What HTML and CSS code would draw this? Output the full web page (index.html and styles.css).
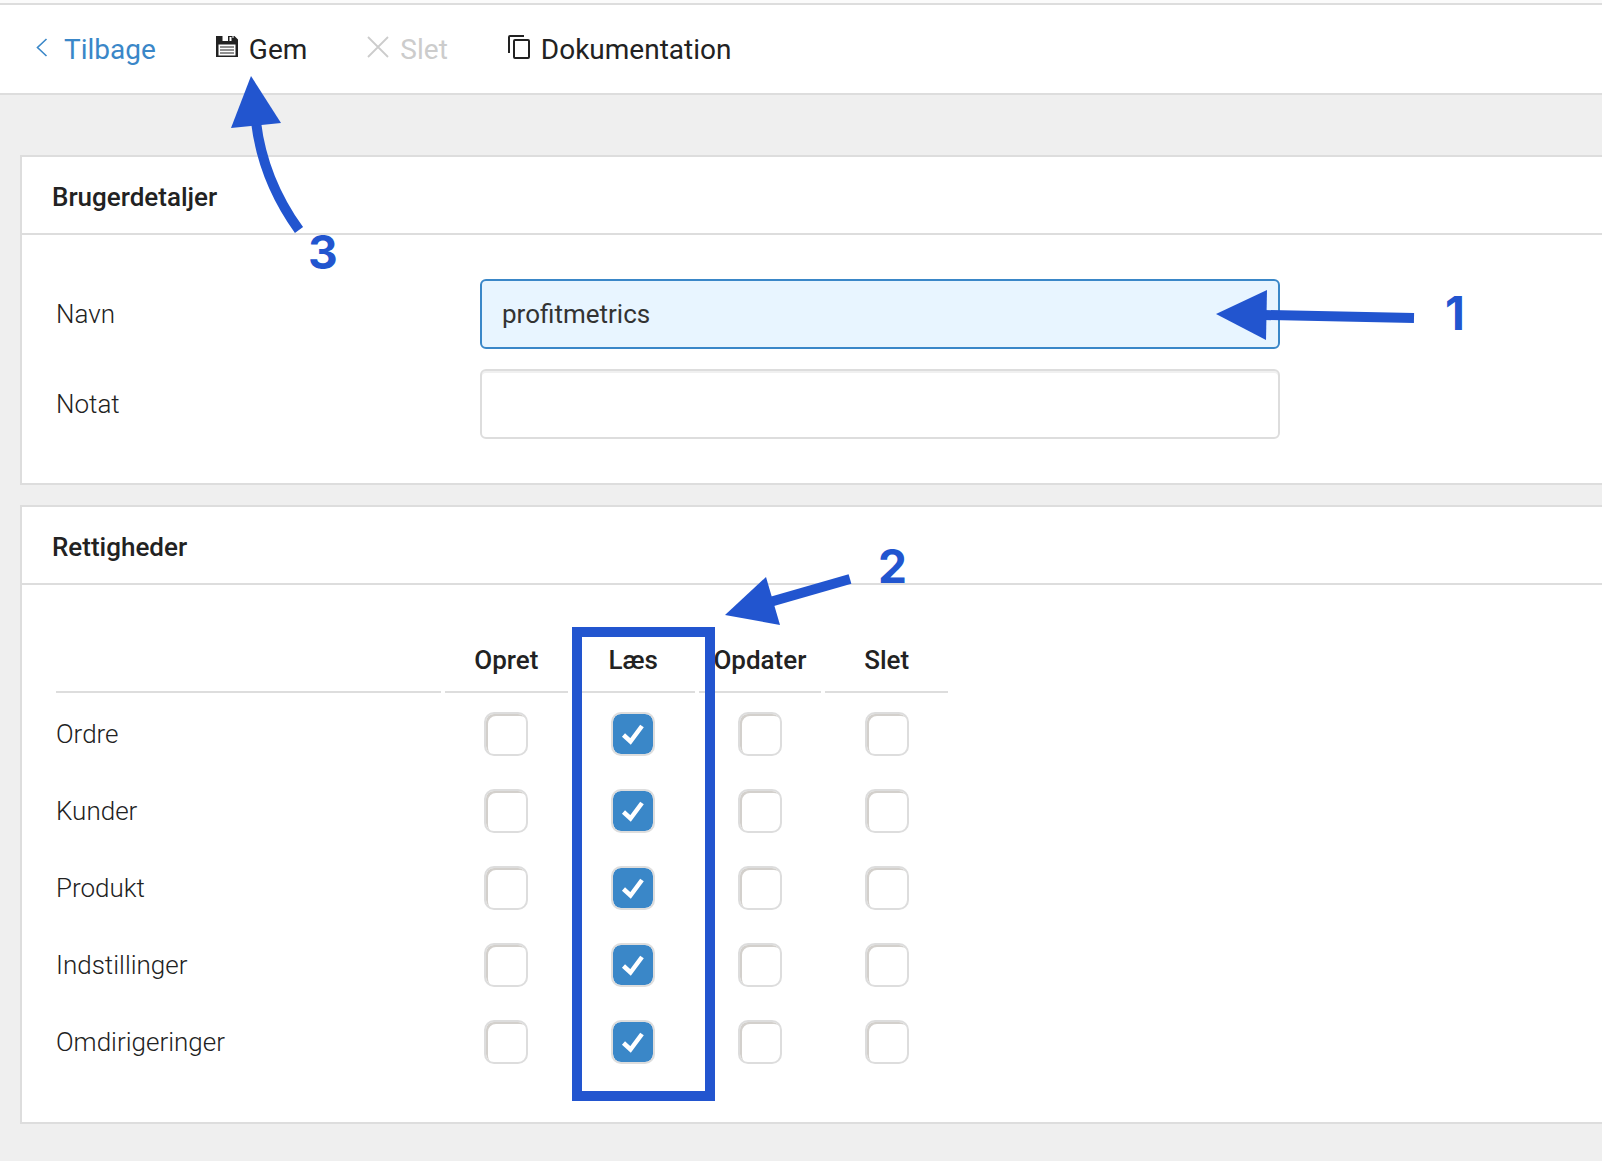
FILE: index.html
```html
<!DOCTYPE html>
<html lang="da">
<head>
<meta charset="utf-8">
<meta name="viewport" content="width=device-width, initial-scale=1">
<title>Brugerdetaljer</title>
<link rel="stylesheet" href="styles.css">
</head>
<body>
<nav class="toolbar">
  <a class="tool tool-back" href="#">
    <svg class="icon icon-narrow" viewBox="0 0 17 24" aria-hidden="true"><path d="M10.500 4 L1.500 12.500 L10.500 21" fill="none" stroke="currentColor" stroke-width="1.600"/></svg>
    Tilbage
  </a>
  <button class="tool" type="button">
    <svg class="icon" viewBox="0 0 22 24" aria-hidden="true">
      <path fill="currentColor" fill-rule="evenodd" d="M0 1 H6.500 V6 H12 V1 H18.500 L22 4.500 V22 H0 Z M2.500 9.500 V20.500 H19.500 V9.500 Z"/>
      <path fill="#fff" d="M13.500 2 H15.500 V6 H13.500 Z M16.500 1 H17.500 V3 H16.500 Z"/>
      <path fill="none" stroke="currentColor" stroke-width="1" d="M4 12 H18 M4 15 H18 M4 18 H18"/>
    </svg>
    Gem
  </button>
  <button class="tool" type="button" disabled>
    <svg class="icon" viewBox="0 0 22 24" aria-hidden="true"><path d="M1 2 L21 22 M21 2 L1 22" fill="none" stroke="currentColor" stroke-width="1.800"/></svg>
    Slet
  </button>
  <button class="tool" type="button">
    <svg class="icon" viewBox="0 0 22 24" aria-hidden="true"><path d="M1 18 V2 Q1 1 2 1 H16" fill="none" stroke="currentColor" stroke-width="2"/><rect x="6" y="5" width="15" height="18" rx="1" fill="none" stroke="currentColor" stroke-width="2"/></svg>
    Dokumentation
  </button>
</nav>

<main class="content">
  <section class="panel">
    <h2 class="panel-title">Brugerdetaljer</h2>
    <form class="panel-body fields">
      <div class="field">
        <label for="navn">Navn</label>
        <input class="text-box is-active" id="navn" type="text" value="profitmetrics">
      </div>
      <div class="field">
        <label for="notat">Notat</label>
        <input class="text-box" id="notat" type="text">
      </div>
    </form>
  </section>

  <section class="panel">
    <h2 class="panel-title">Rettigheder</h2>
    <div class="panel-body">
      <table class="rights">
        <thead>
          <tr><td class="corner"></td><th scope="col">Opret</th><th scope="col">Læs</th><th scope="col">Opdater</th><th scope="col">Slet</th></tr>
        </thead>
        <tbody>
          <tr><th scope="row">Ordre</th><td><input type="checkbox" aria-label="Ordre: Opret"></td><td><input type="checkbox" aria-label="Ordre: Læs" checked></td><td><input type="checkbox" aria-label="Ordre: Opdater"></td><td><input type="checkbox" aria-label="Ordre: Slet"></td></tr>
          <tr><th scope="row">Kunder</th><td><input type="checkbox" aria-label="Kunder: Opret"></td><td><input type="checkbox" aria-label="Kunder: Læs" checked></td><td><input type="checkbox" aria-label="Kunder: Opdater"></td><td><input type="checkbox" aria-label="Kunder: Slet"></td></tr>
          <tr><th scope="row">Produkt</th><td><input type="checkbox" aria-label="Produkt: Opret"></td><td><input type="checkbox" aria-label="Produkt: Læs" checked></td><td><input type="checkbox" aria-label="Produkt: Opdater"></td><td><input type="checkbox" aria-label="Produkt: Slet"></td></tr>
          <tr><th scope="row">Indstillinger</th><td><input type="checkbox" aria-label="Indstillinger: Opret"></td><td><input type="checkbox" aria-label="Indstillinger: Læs" checked></td><td><input type="checkbox" aria-label="Indstillinger: Opdater"></td><td><input type="checkbox" aria-label="Indstillinger: Slet"></td></tr>
          <tr><th scope="row">Omdirigeringer</th><td><input type="checkbox" aria-label="Omdirigeringer: Opret"></td><td><input type="checkbox" aria-label="Omdirigeringer: Læs" checked></td><td><input type="checkbox" aria-label="Omdirigeringer: Opdater"></td><td><input type="checkbox" aria-label="Omdirigeringer: Slet"></td></tr>
        </tbody>
      </table>
    </div>
  </section>
</main>

<!-- Step markers laid over the form -->
<svg class="guide">
  <path class="guide-line" d="M1264 315 L1414 318"/>
  <path class="guide-head" d="M1216 314 L1267 290 L1266 340 Z"/>
  <text x="1445" y="330">1</text>

  <rect class="guide-line" x="577" y="632" width="133" height="464"/>
  <path class="guide-line" d="M770 602 L850 579"/>
  <path class="guide-head" d="M725 615 L766 577 L780 625 Z"/>
  <text x="878" y="583">2</text>

  <path class="guide-line" d="M256 122 Q263 180 299 230"/>
  <path class="guide-head" d="M251 76 L231 128 L281 123 Z"/>
  <text x="308" y="269">3</text>
</svg>
</body>
</html>
```
FILE: styles.css
```css
* {
  box-sizing: border-box;
}

body {
  position: relative;
  margin: 0;
  min-height: 100vh;
  background: #efefef;
  color: #222;
  font: 300 26px/32px Roboto, "Liberation Sans", sans-serif;
}

.toolbar {
  display: flex;
  align-items: center;
  gap: 60px;
  height: 95px;
  padding: 4px 36px 0;
  border-top: 3px solid #fbfbfb;
  border-bottom: 2px solid #ddd;
  background: #fff;
  box-shadow: inset 0 2px #ddd;
}

.tool {
  display: flex;
  align-items: center;
  gap: 11px;
  padding: 0;
  border: 0;
  background: none;
  color: #222;
  font: 400 28px/32px Roboto, "Liberation Sans", sans-serif;
  text-decoration: none;
}

.tool-back {
  color: #3a87c8;
}

.tool:disabled {
  color: #ccc;
}

.icon {
  width: 22px;
  height: 24px;
  margin-bottom: 6px;
}

.icon-narrow {
  width: 17px;
}

.content {
  display: flex;
  flex-direction: column;
  gap: 20px;
  padding: 60px 0 36px 20px;
}

.panel {
  border: 2px solid #ddd;
  border-right: 0;
  background: #fff;
}

.panel-title {
  margin: 0;
  padding: 24px 30px 20px;
  border-bottom: 2px solid #ddd;
  font-size: 26px;
  font-weight: 500;
  line-height: 32px;
}

.panel-body {
  padding: 40px 30px;
}

.fields {
  display: flex;
  flex-direction: column;
  gap: 20px;
  padding: 44px 34px;
}

.field {
  display: grid;
  grid-template-columns: 424px minmax(0, 800px);
  align-items: center;
}

.text-box {
  width: 100%;
  height: 70px;
  padding: 0 20px;
  border: 2px solid #ddd;
  border-radius: 6px;
  background: #fff;
  box-shadow: inset 0 2px #f0f0f0;
  color: #333;
  font: 400 26px/32px Roboto, "Liberation Sans", sans-serif;
}

.text-box.is-active {
  border-color: #3a87c8;
  background: #e8f5ff;
  box-shadow: none;
}

.rights {
  width: 900px;
  table-layout: fixed;
  border-collapse: separate;
  border-spacing: 4px;
}

.rights td,
.rights th {
  height: 73px;
  padding: 0;
  text-align: center;
  vertical-align: middle;
}

.rights thead td,
.rights thead th {
  height: 64px;
  border-bottom: 2px solid #ddd;
  font-weight: 500;
}

.rights .corner {
  width: 385px;
}

.rights tbody th {
  font-weight: 300;
  text-align: left;
}

.rights input {
  display: block;
  width: 44px;
  height: 44px;
  margin: 0 auto;
  appearance: none;
  border: 2px solid #ddd;
  border-radius: 10px;
  background: #fff;
  box-shadow: inset 2px 2px #d3d0cc;
}

.rights input:checked {
  background: #3a87c8 url("data:image/svg+xml,%3Csvg xmlns='http://www.w3.org/2000/svg' viewBox='0 0 40 40'%3E%3Cpath d='M10.500 21L17.500 27.500L29 12' fill='none' stroke='white' stroke-width='4.500'/%3E%3C/svg%3E") center / 40px 40px no-repeat padding-box;
  box-shadow: none;
}

.guide {
  position: absolute;
  top: 0;
  left: 0;
  width: 100%;
  height: 100%;
  pointer-events: none;
  fill: #2255cf;
  font: 700 46px/48px Inter, "Open Sans", sans-serif;
}

.guide-line {
  fill: none;
  stroke: #2255cf;
  stroke-width: 10px;
}
```
